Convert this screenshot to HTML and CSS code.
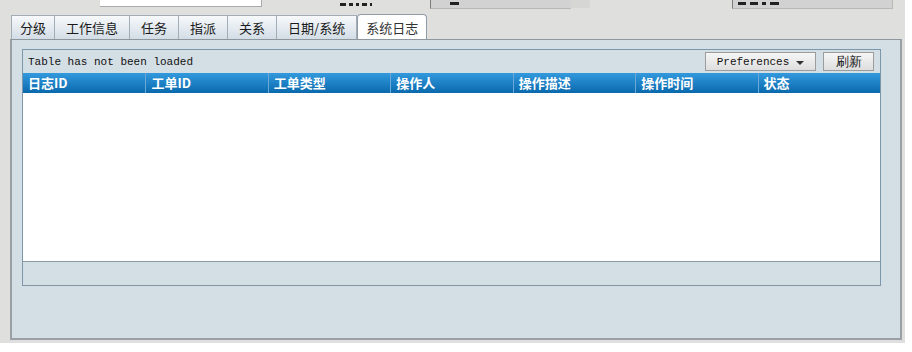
FILE: index.html
```html
<!DOCTYPE html>
<html lang="zh">
<head>
  <meta charset="UTF-8">
  <title>系统日志</title>
  <link rel="stylesheet" href="styles.css">
</head>
<body>

  <div class="window">

    <div class="topbar">
      <div class="field field-white"></div>
      <div class="label-stub">
        <i class="bit w6"></i><i class="bit w4"></i><i class="bit w3"></i><i class="bit w5"></i><i class="bit w2"></i>
      </div>
      <div class="field field-grey field-two">
        <i class="bit w9"></i>
      </div>
      <div class="field-step"></div>
      <div class="field field-grey field-three">
        <i class="bit w8"></i><i class="bit w8"></i><i class="bit w4"></i><i class="bit w9"></i>
      </div>
    </div>

    <div class="tabbar">
      <div class="tab tab-first">分级</div>
      <div class="tab">工作信息</div>
      <div class="tab">任务</div>
      <div class="tab">指派</div>
      <div class="tab">关系</div>
      <div class="tab">日期/系统</div>
      <div class="tab tab-active">系统日志</div>
    </div>

    <div class="panel">
      <div class="grid">
        <div class="toolbar">
          <span class="status">Table has not been loaded</span>
          <div class="buttons">
            <button type="button" class="btn btn-prefs">Preferences <span class="caret"></span></button>
            <button type="button" class="btn btn-refresh">刷新</button>
          </div>
        </div>

        <div class="header">
          <div class="col">日志ID</div>
          <div class="col">工单ID</div>
          <div class="col">工单类型</div>
          <div class="col">操作人</div>
          <div class="col">操作描述</div>
          <div class="col">操作时间</div>
          <div class="col">状态</div>
        </div>

        <div class="rows"></div>

        <div class="footer"></div>
      </div>
    </div>

  </div>

</body>
</html>
```

FILE: styles.css
```css
body {
  margin: 0;
  background: #fff;
  font-family: "Noto Sans CJK SC", "DejaVu Sans", sans-serif;
}

.window {
  width: 905px;
  height: 343px;
  box-sizing: border-box;
  padding: 0 3px 3px 10px;
  background: #dfe0dd;
  display: flex;
  flex-direction: column;
}

/* cut-off controls at the top edge */
.topbar {
  height: 10px;
  margin-left: -10px;
  display: flex;
  align-items: flex-start;
  overflow: hidden;
}
.field {
  box-sizing: border-box;
}
.field-white {
  margin-left: 100px;
  width: 162px;
  height: 7px;
  background: #fff;
  border-right: 1px solid #a9a9a9;
  border-bottom: 1px solid #a9a9a9;
}
.label-stub {
  margin-left: 78px;
  margin-top: 3px;
  display: flex;
  gap: 3px;
}
.bit {
  display: block;
  height: 3px;
  background: #222;
}
.w2 { width: 2px; }
.w3 { width: 3px; }
.w4 { width: 4px; }
.w5 { width: 5px; }
.w6 { width: 6px; }
.w8 { width: 8px; }
.w9 { width: 9px; }
.field-grey {
  height: 9px;
  padding: 2px 0 0 5px;
  display: flex;
  gap: 4px;
  background: #d2d2d2;
  border-left: 1px solid #7d7d7d;
  border-bottom: 1px solid #b8b8b8;
}
.field-two {
  margin-left: 58px;
  width: 141px;
  padding-left: 19px;
}
.field-step {
  width: 19px;
  height: 8px;
  background: #d6d7d5;
}
.field-three {
  margin-left: 142px;
  width: 161px;
  border-right: 1px solid #b8b8b8;
}

/* tabs */
.tabbar {
  margin-top: 4px;
  height: 25px;
  display: flex;
  align-items: flex-end;
  padding-left: 1px;
}
.tab {
  height: 24px;
  box-sizing: border-box;
  padding: 0 11px;
  display: flex;
  align-items: center;
  font-size: 13px;
  color: #1a1a1a;
  background: linear-gradient(#f7f9fb, #d3dde6);
  border: 1px solid #a3adb6;
  border-bottom: none;
  border-left: none;
}
.tab-first {
  padding: 0 8px;
  border-left: 1px solid #a3adb6;
}
.tab-active {
  height: 25px;
  padding: 0 8px;
  background: #fff;
  border: 1px solid #8f9ba6;
  border-bottom: none;
  border-radius: 4px 4px 0 0;
  color: #333;
}

/* panel */
.panel {
  flex: 1;
  background: #d4dee5;
  border-top: 1px solid #8e979e;
  border-left: 2px solid #9aa0a5;
  border-right: 2px solid #9aa0a5;
  border-bottom: 2px solid #9aa0a5;
  padding: 9px 0 0 10px;
}

.grid {
  width: 859px;
  box-sizing: border-box;
  border: 1px solid #7c96ab;
  border-bottom-color: #8596a2;
  display: flex;
  flex-direction: column;
}

.toolbar {
  height: 23px;
  display: flex;
  align-items: center;
  justify-content: space-between;
  padding: 0 6px 0 5px;
  background: #d4dee5;
}
.status {
  font-family: "Liberation Mono", monospace;
  font-size: 11px;
  color: #111;
}
.buttons {
  display: flex;
  gap: 7px;
}
.btn {
  height: 19px;
  box-sizing: border-box;
  padding: 0;
  background: linear-gradient(#f6f6f6, #dedede);
  border: 1px solid #9c9c9c;
  color: #111;
  display: flex;
  align-items: center;
  justify-content: center;
}
.btn-prefs {
  width: 111px;
  font-family: "Liberation Mono", monospace;
  font-size: 11px;
}
.caret {
  margin-left: 7px;
  margin-top: 2px;
  border-left: 4px solid transparent;
  border-right: 4px solid transparent;
  border-top: 4px solid #333;
}
.btn-refresh {
  width: 51px;
  font-size: 13px;
}

.header {
  height: 20px;
  display: grid;
  grid-template-columns: repeat(7, 1fr);
  background: linear-gradient(#3399dd, #0a69ad);
}
.col {
  padding-left: 5px;
  border-left: 1px solid #6aa9d6;
  color: #fff;
  font-size: 13px;
  font-weight: bold;
  line-height: 19px;
}
.col:first-child {
  border-left: none;
}

.rows {
  height: 168px;
  background: #fff;
}

.footer {
  height: 23px;
  background: #d4dee5;
  border-top: 1px solid #8a9ba7;
}
```
